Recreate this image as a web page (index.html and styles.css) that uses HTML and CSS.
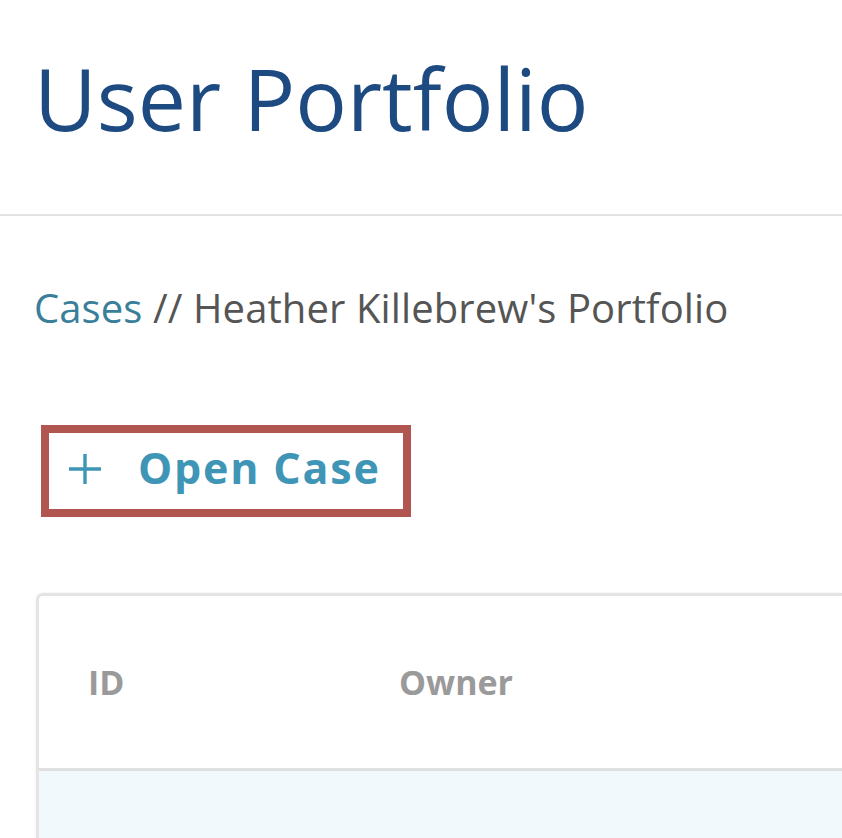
FILE: index.html
```html
<!DOCTYPE html>
<html lang="en">
<head>
    <meta charset="UTF-8">
    <meta name="viewport" content="width=device-width, initial-scale=1.0">
    <title>User Portfolio</title>
    <link rel="stylesheet" href="styles.css">
</head>
<body>
    <!-- page header -->
    <header class="page-header">
        <h1 class="page-title">User Portfolio</h1>
    </header>

    <main class="content">
        <nav class="breadcrumb">
            <a href="#" class="crumb-link">Cases</a> // Heather Killebrew's Portfolio
        </nav>

        <div class="actions">
            <button class="open-case">
                <svg class="plus" width="34" height="32" viewBox="0 0 34 32">
                    <path d="M17 1 V31 M1 16 H33" stroke="currentColor" stroke-width="3.4" fill="none"/>
                </svg>
                <span>Open Case</span>
            </button>
        </div>

        <div class="card">
            <table class="cases-table">
                <thead>
                    <tr>
                        <th class="col-id">ID</th>
                        <th>Owner</th>
                    </tr>
                </thead>
                <tbody>
                    <tr class="row-hl">
                        <td></td>
                        <td></td>
                    </tr>
                </tbody>
            </table>
        </div>
    </main>
</body>
</html>
```

FILE: styles.css
```css
body {
    margin: 0;
    font-family: "Open Sans", Lato, sans-serif;
    background: #fff;
    overflow: hidden;
}

.page-header {
    padding: 40px 0 0 34px;
    height: 216px;
    border-bottom: 2px solid #e2e2e2;
    box-sizing: border-box;
}

.page-title {
    margin: 0;
    font-size: 86px;
    font-weight: 400;
    line-height: 116px;
    color: #1d4a80;
}

.content {
    padding: 0 0 0 34px;
}

.breadcrumb {
    margin-top: 68px;
    font-size: 40px;
    line-height: 48px;
    letter-spacing: 0.1px;
    color: #555;
}

.crumb-link {
    color: #3a7f9a;
    text-decoration: none;
}

.actions {
    margin-top: 93px;
    padding-left: 7px;
}

.open-case {
    display: flex;
    align-items: center;
    gap: 36px;
    width: 370px;
    height: 92px;
    padding: 0 0 8px 19px;
    border: 8px solid #b0554f;
    background: #fff;
    color: #3f95b6;
    font-family: inherit;
    font-size: 43px;
    font-weight: 700;
    letter-spacing: 1.8px;
    box-sizing: border-box;
    cursor: pointer;
}

.plus {
    flex: none;
    margin-top: 4px;
}

.card {
    margin-top: 76px;
    margin-left: 2px;
    border: 3px solid #e4e4e4;
    border-right: none;
    border-bottom: none;
    border-radius: 7px 0 0 0;
    box-shadow: 0 0 3px rgba(0, 0, 0, 0.08);
    overflow: hidden;
}

.cases-table {
    width: 100%;
    border-collapse: collapse;
}

.cases-table th {
    height: 172px;
    padding: 0;
    text-align: left;
    font-size: 34px;
    font-weight: 700;
    color: #9a9a9a;
    border-bottom: 3px solid #e0e0e0;
}

.col-id {
    width: 360px;
    padding-left: 49px !important;
    box-sizing: border-box;
}

.row-hl td {
    height: 80px;
    background: #f2f9fc;
}
```
